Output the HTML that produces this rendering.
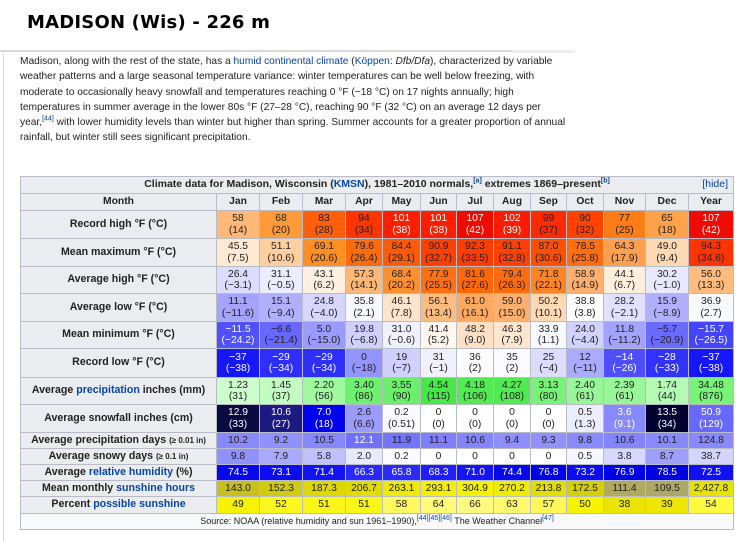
<!DOCTYPE html>
<html><head><meta charset="utf-8">
<style>
*{margin:0;padding:0;box-sizing:border-box}
body{width:750px;height:541px;background:#fff;font-family:"Liberation Sans",Arial,sans-serif;color:#222;position:relative;overflow:hidden}
h1{position:absolute;left:27px;top:12px;font-size:18px;font-weight:bold;color:#000;letter-spacing:0.2px;font-family:"DejaVu Sans","Liberation Sans",sans-serif}
.hl{position:absolute;left:0;top:50px;width:512px;height:2px;background:#d8d8d8}
.hl2{position:absolute;left:512px;top:50px;width:63px;height:3px;background:#eee}
.vl{position:absolute;left:3px;top:53px;width:1px;height:488px;background:#c8dcef}
p{position:absolute;left:20px;top:54px;width:600px;font-size:10.2px;line-height:15.3px;color:#222;white-space:nowrap}
a,.a{color:#0645ad;text-decoration:none}
sup{font-size:7px;line-height:0;vertical-align:super;color:#0645ad}
table{position:absolute;left:20px;top:176px;width:713px;border-collapse:collapse;table-layout:fixed;font-size:10.3px;background:#f8f9fa}
td,th{border:1px solid #b8bcc4;text-align:center;line-height:11.5px;padding:0;overflow:hidden;white-space:nowrap}
th{background:#eaecf0;font-weight:bold;color:#222}
th.l{font-size:10.6px}
small{font-size:8px}
.cap{background:#eaecf0;font-weight:bold;font-size:10.5px;position:relative}
.cap span.h{position:absolute;right:5px;top:2px;font-weight:normal;color:#0645ad}
.w{color:#fff}
.src{background:#f8f9fa;font-size:9px;color:#222}
</style></head><body>
<h1>MADISON (Wis) - 226 m</h1>
<div class="hl"></div><div class="hl2"></div><div class="vl"></div>
<p>Madison, along with the rest of the state, has a <a>humid continental climate</a> (<a>Köppen</a>: <i>Dfb/Dfa</i>), characterized by variable<br>weather patterns and a large seasonal temperature variance: winter temperatures can be well below freezing, with<br>moderate to occasionally heavy snowfall and temperatures reaching 0&nbsp;°F (−18&nbsp;°C) on 17 nights annually; high<br>temperatures in summer average in the lower 80s&nbsp;°F (27–28&nbsp;°C), reaching 90&nbsp;°F (32&nbsp;°C) on an average 12 days per<br>year,<sup>[44]</sup> with lower humidity levels than winter but higher than spring. Summer accounts for a greater proportion of annual<br>rainfall, but winter still sees significant precipitation.</p>

<table>
<colgroup><col style="width:196px"><col style="width:43px"><col style="width:43px"><col style="width:43px"><col style="width:37px"><col style="width:38px"><col style="width:36px"><col style="width:37px"><col style="width:37px"><col style="width:36px"><col style="width:37px"><col style="width:42px"><col style="width:43px"><col style="width:45px"></colgroup>
<tr style="height:17px"><td colspan="14" class="cap">Climate data for Madison, Wisconsin (<span class="a">KMSN</span>), 1981–2010 normals,<sup>[a]</sup> extremes 1869–present<sup>[b]</sup><span class="h">[hide]</span></td></tr>
<tr style="height:17px"><th>Month</th><th>Jan</th><th>Feb</th><th>Mar</th><th>Apr</th><th>May</th><th>Jun</th><th>Jul</th><th>Aug</th><th>Sep</th><th>Oct</th><th>Nov</th><th>Dec</th><th>Year</th></tr>
<tr style="height:28px"><th class="l">Record high °F (°C)</th>
<td style="background:#ffb877">58<br>(14)</td><td style="background:#ff9a38">68<br>(20)</td><td style="background:#ff5f0a">83<br>(28)</td><td style="background:#ff3400">94<br>(34)</td><td class="w" style="background:#ff1f00">101<br>(38)</td><td class="w" style="background:#ff1f00">101<br>(38)</td><td class="w" style="background:#f00a00">107<br>(42)</td><td class="w" style="background:#ff1a00">102<br>(39)</td><td style="background:#ff2a00">99<br>(37)</td><td style="background:#ff4200">90<br>(32)</td><td style="background:#ff7c16">77<br>(25)</td><td style="background:#ffa24a">65<br>(18)</td><td class="w" style="background:#f00a00">107<br>(42)</td></tr>
<tr style="height:28px"><th class="l">Mean maximum °F (°C)</th>
<td style="background:#ffe8d4">45.5<br>(7.5)</td><td style="background:#ffcfa0">51.1<br>(10.6)</td><td style="background:#ff8f22">69.1<br>(20.6)</td><td style="background:#ff6a0a">79.6<br>(26.4)</td><td style="background:#ff5b05">84.4<br>(29.1)</td><td style="background:#ff4100">90.9<br>(32.7)</td><td style="background:#ff3d00">92.3<br>(33.5)</td><td style="background:#ff4000">91.1<br>(32.8)</td><td style="background:#ff4f00">87.0<br>(30.6)</td><td style="background:#ff6e10">78.5<br>(25.8)</td><td style="background:#ffa050">64.3<br>(17.9)</td><td style="background:#ffd8b4">49.0<br>(9.4)</td><td style="background:#ff3400">94.3<br>(34.6)</td></tr>
<tr style="height:27px"><th class="l">Average high °F (°C)</th>
<td style="background:#dcdcff">26.4<br>(−3.1)</td><td style="background:#ececff">31.1<br>(−0.5)</td><td style="background:#fff0e2">43.1<br>(6.2)</td><td style="background:#ffb876">57.3<br>(14.1)</td><td style="background:#ff9030">68.4<br>(20.2)</td><td style="background:#ff7014">77.9<br>(25.5)</td><td style="background:#ff6808">81.6<br>(27.6)</td><td style="background:#ff6c10">79.4<br>(26.3)</td><td style="background:#ff8424">71.8<br>(22.1)</td><td style="background:#ffb070">58.9<br>(14.9)</td><td style="background:#ffeedc">44.1<br>(6.7)</td><td style="background:#e8e8ff">30.2<br>(−1.0)</td><td style="background:#ffbc7c">56.0<br>(13.3)</td></tr>
<tr style="height:28px"><th class="l">Average low °F (°C)</th>
<td style="background:#a4a4ff">11.1<br>(−11.6)</td><td style="background:#b0b0ff">15.1<br>(−9.4)</td><td style="background:#d6d6ff">24.8<br>(−4.0)</td><td style="background:#f6f6ff">35.8<br>(2.1)</td><td style="background:#ffe4cc">46.1<br>(7.8)</td><td style="background:#ffbc80">56.1<br>(13.4)</td><td style="background:#ffa860">61.0<br>(16.1)</td><td style="background:#ffb06e">59.0<br>(15.0)</td><td style="background:#ffd8b4">50.2<br>(10.1)</td><td style="background:#fefeff">38.8<br>(3.8)</td><td style="background:#e0e0ff">28.2<br>(−2.1)</td><td style="background:#b0b0ff">15.9<br>(−8.9)</td><td style="background:#f8f8ff">36.9<br>(2.7)</td></tr>
<tr style="height:27px"><th class="l">Mean minimum °F (°C)</th>
<td class="w" style="background:#5050ff">−11.5<br>(−24.2)</td><td style="background:#6868ff">−6.6<br>(−21.4)</td><td style="background:#9a9aff">5.0<br>(−15.0)</td><td style="background:#d0d0ff">19.8<br>(−6.8)</td><td style="background:#f0f0ff">31.0<br>(−0.6)</td><td style="background:#fff6ee">41.4<br>(5.2)</td><td style="background:#ffe0c4">48.2<br>(9.0)</td><td style="background:#ffe6d0">46.3<br>(7.9)</td><td style="background:#f8f8ff">33.9<br>(1.1)</td><td style="background:#d2d2ff">24.0<br>(−4.4)</td><td style="background:#a2a2ff">11.8<br>(−11.2)</td><td style="background:#6a6aff">−5.7<br>(−20.9)</td><td class="w" style="background:#4444ff">−15.7<br>(−26.5)</td></tr>
<tr style="height:29px"><th class="l">Record low °F (°C)</th>
<td class="w" style="background:#1616ff">−37<br>(−38)</td><td class="w" style="background:#2e2eff">−29<br>(−34)</td><td class="w" style="background:#2e2eff">−29<br>(−34)</td><td style="background:#9494ff">0<br>(−18)</td><td style="background:#d0d0ff">19<br>(−7)</td><td style="background:#f0f0ff">31<br>(−1)</td><td style="background:#fcfcff">36<br>(2)</td><td style="background:#fafaff">35<br>(2)</td><td style="background:#dcdcff">25<br>(−4)</td><td style="background:#aaaaff">12<br>(−11)</td><td class="w" style="background:#4e4eff">−14<br>(−26)</td><td class="w" style="background:#3232ff">−28<br>(−33)</td><td class="w" style="background:#1616ff">−37<br>(−38)</td></tr>
<tr style="height:27px"><th class="l">Average <span class="a">precipitation</span> inches (mm)</th>
<td style="background:#cdfdcd">1.23<br>(31)</td><td style="background:#c2fcc2">1.45<br>(37)</td><td style="background:#a0f8a0">2.20<br>(56)</td><td style="background:#70f070">3.40<br>(86)</td><td style="background:#6cf06c">3.55<br>(90)</td><td style="background:#48e848">4.54<br>(115)</td><td style="background:#54ea54">4.18<br>(106)</td><td style="background:#52ea52">4.27<br>(108)</td><td style="background:#78f278">3.13<br>(80)</td><td style="background:#98f698">2.40<br>(61)</td><td style="background:#98f698">2.39<br>(61)</td><td style="background:#b4fab4">1.74<br>(44)</td><td style="background:#78f278">34.48<br>(876)</td></tr>
<tr style="height:28px"><th class="l">Average snowfall inches (cm)</th>
<td class="w" style="background:#0a0a40">12.9<br>(33)</td><td class="w" style="background:#1a1a80">10.6<br>(27)</td><td class="w" style="background:#0000ee">7.0<br>(18)</td><td style="background:#9a9aff">2.6<br>(6.6)</td><td style="background:#fafaff">0.2<br>(0.51)</td><td style="background:#fff">0<br>(0)</td><td style="background:#fff">0<br>(0)</td><td style="background:#fff">0<br>(0)</td><td style="background:#fff">0<br>(0)</td><td style="background:#ececff">0.5<br>(1.3)</td><td class="w" style="background:#8888ff">3.6<br>(9.1)</td><td class="w" style="background:#000030">13.5<br>(34)</td><td class="w" style="background:#6868ff">50.9<br>(129)</td></tr>
<tr style="height:16px"><th class="l">Average precipitation days <small>(≥ 0.01 in)</small></th>
<td style="background:#8888ff">10.2</td><td style="background:#9090ff">9.2</td><td style="background:#8686ff">10.5</td><td class="w" style="background:#7070ff">12.1</td><td style="background:#7474ff">11.9</td><td style="background:#7e7eff">11.1</td><td style="background:#8484ff">10.6</td><td style="background:#8e8eff">9.4</td><td style="background:#9090ff">9.3</td><td style="background:#8a8aff">9.8</td><td style="background:#8484ff">10.6</td><td style="background:#8888ff">10.1</td><td style="background:#8888ff">124.8</td></tr>
<tr style="height:16px"><th class="l">Average snowy days <small>(≥ 0.1 in)</small></th>
<td style="background:#9090ff">9.8</td><td style="background:#a8a8ff">7.9</td><td style="background:#c0c0ff">5.8</td><td style="background:#e8e8ff">2.0</td><td style="background:#fafaff">0.2</td><td style="background:#fff">0</td><td style="background:#fff">0</td><td style="background:#fff">0</td><td style="background:#fff">0</td><td style="background:#f6f6ff">0.5</td><td style="background:#d6d6ff">3.8</td><td style="background:#9e9eff">8.7</td><td style="background:#d4d4ff">38.7</td></tr>
<tr style="height:16px"><th class="l">Average <span class="a">relative humidity</span> (%)</th>
<td class="w" style="background:#0808f0">74.5</td><td class="w" style="background:#0c0cf2">73.1</td><td class="w" style="background:#1212f4">71.4</td><td class="w" style="background:#2828ff">66.3</td><td class="w" style="background:#2a2aff">65.8</td><td class="w" style="background:#1e1eff">68.3</td><td class="w" style="background:#1414f6">71.0</td><td class="w" style="background:#0808f0">74.4</td><td class="w" style="background:#0000e8">76.8</td><td class="w" style="background:#0c0cf2">73.2</td><td class="w" style="background:#0000e8">76.9</td><td class="w" style="background:#0000e0">78.5</td><td class="w" style="background:#1010f2">72.5</td></tr>
<tr style="height:16px"><th class="l">Mean monthly <span class="a">sunshine hours</span></th>
<td style="background:#c8c020">143.0</td><td style="background:#d0ca10">152.3</td><td style="background:#dcd800">187.3</td><td style="background:#e0dc00">206.7</td><td style="background:#eeea00">263.1</td><td style="background:#f4f000">293.1</td><td style="background:#f6f200">304.9</td><td style="background:#efec00">270.2</td><td style="background:#e2de00">213.8</td><td style="background:#d4d000">172.5</td><td style="background:#b0aa60">111.4</td><td style="background:#aea868">109.5</td><td style="background:#e6e200">2,427.8</td></tr>
<tr style="height:17px"><th class="l">Percent <span class="a">possible sunshine</span></th>
<td style="background:#f6f200">49</td><td style="background:#fbf820">52</td><td style="background:#faf618">51</td><td style="background:#faf618">51</td><td style="background:#fff860">58</td><td style="background:#fffa78">64</td><td style="background:#fffa80">66</td><td style="background:#fff970">63</td><td style="background:#fff858">57</td><td style="background:#f8f400">50</td><td style="background:#eae400">38</td><td style="background:#ece600">39</td><td style="background:#fefa40">54</td></tr>
<tr style="height:16px"><td colspan="14" class="src">Source: NOAA (relative humidity and sun 1961–1990),<sup>[44][45][46]</sup> The Weather Channel<sup>[47]</sup></td></tr>
</table>
</body></html>
